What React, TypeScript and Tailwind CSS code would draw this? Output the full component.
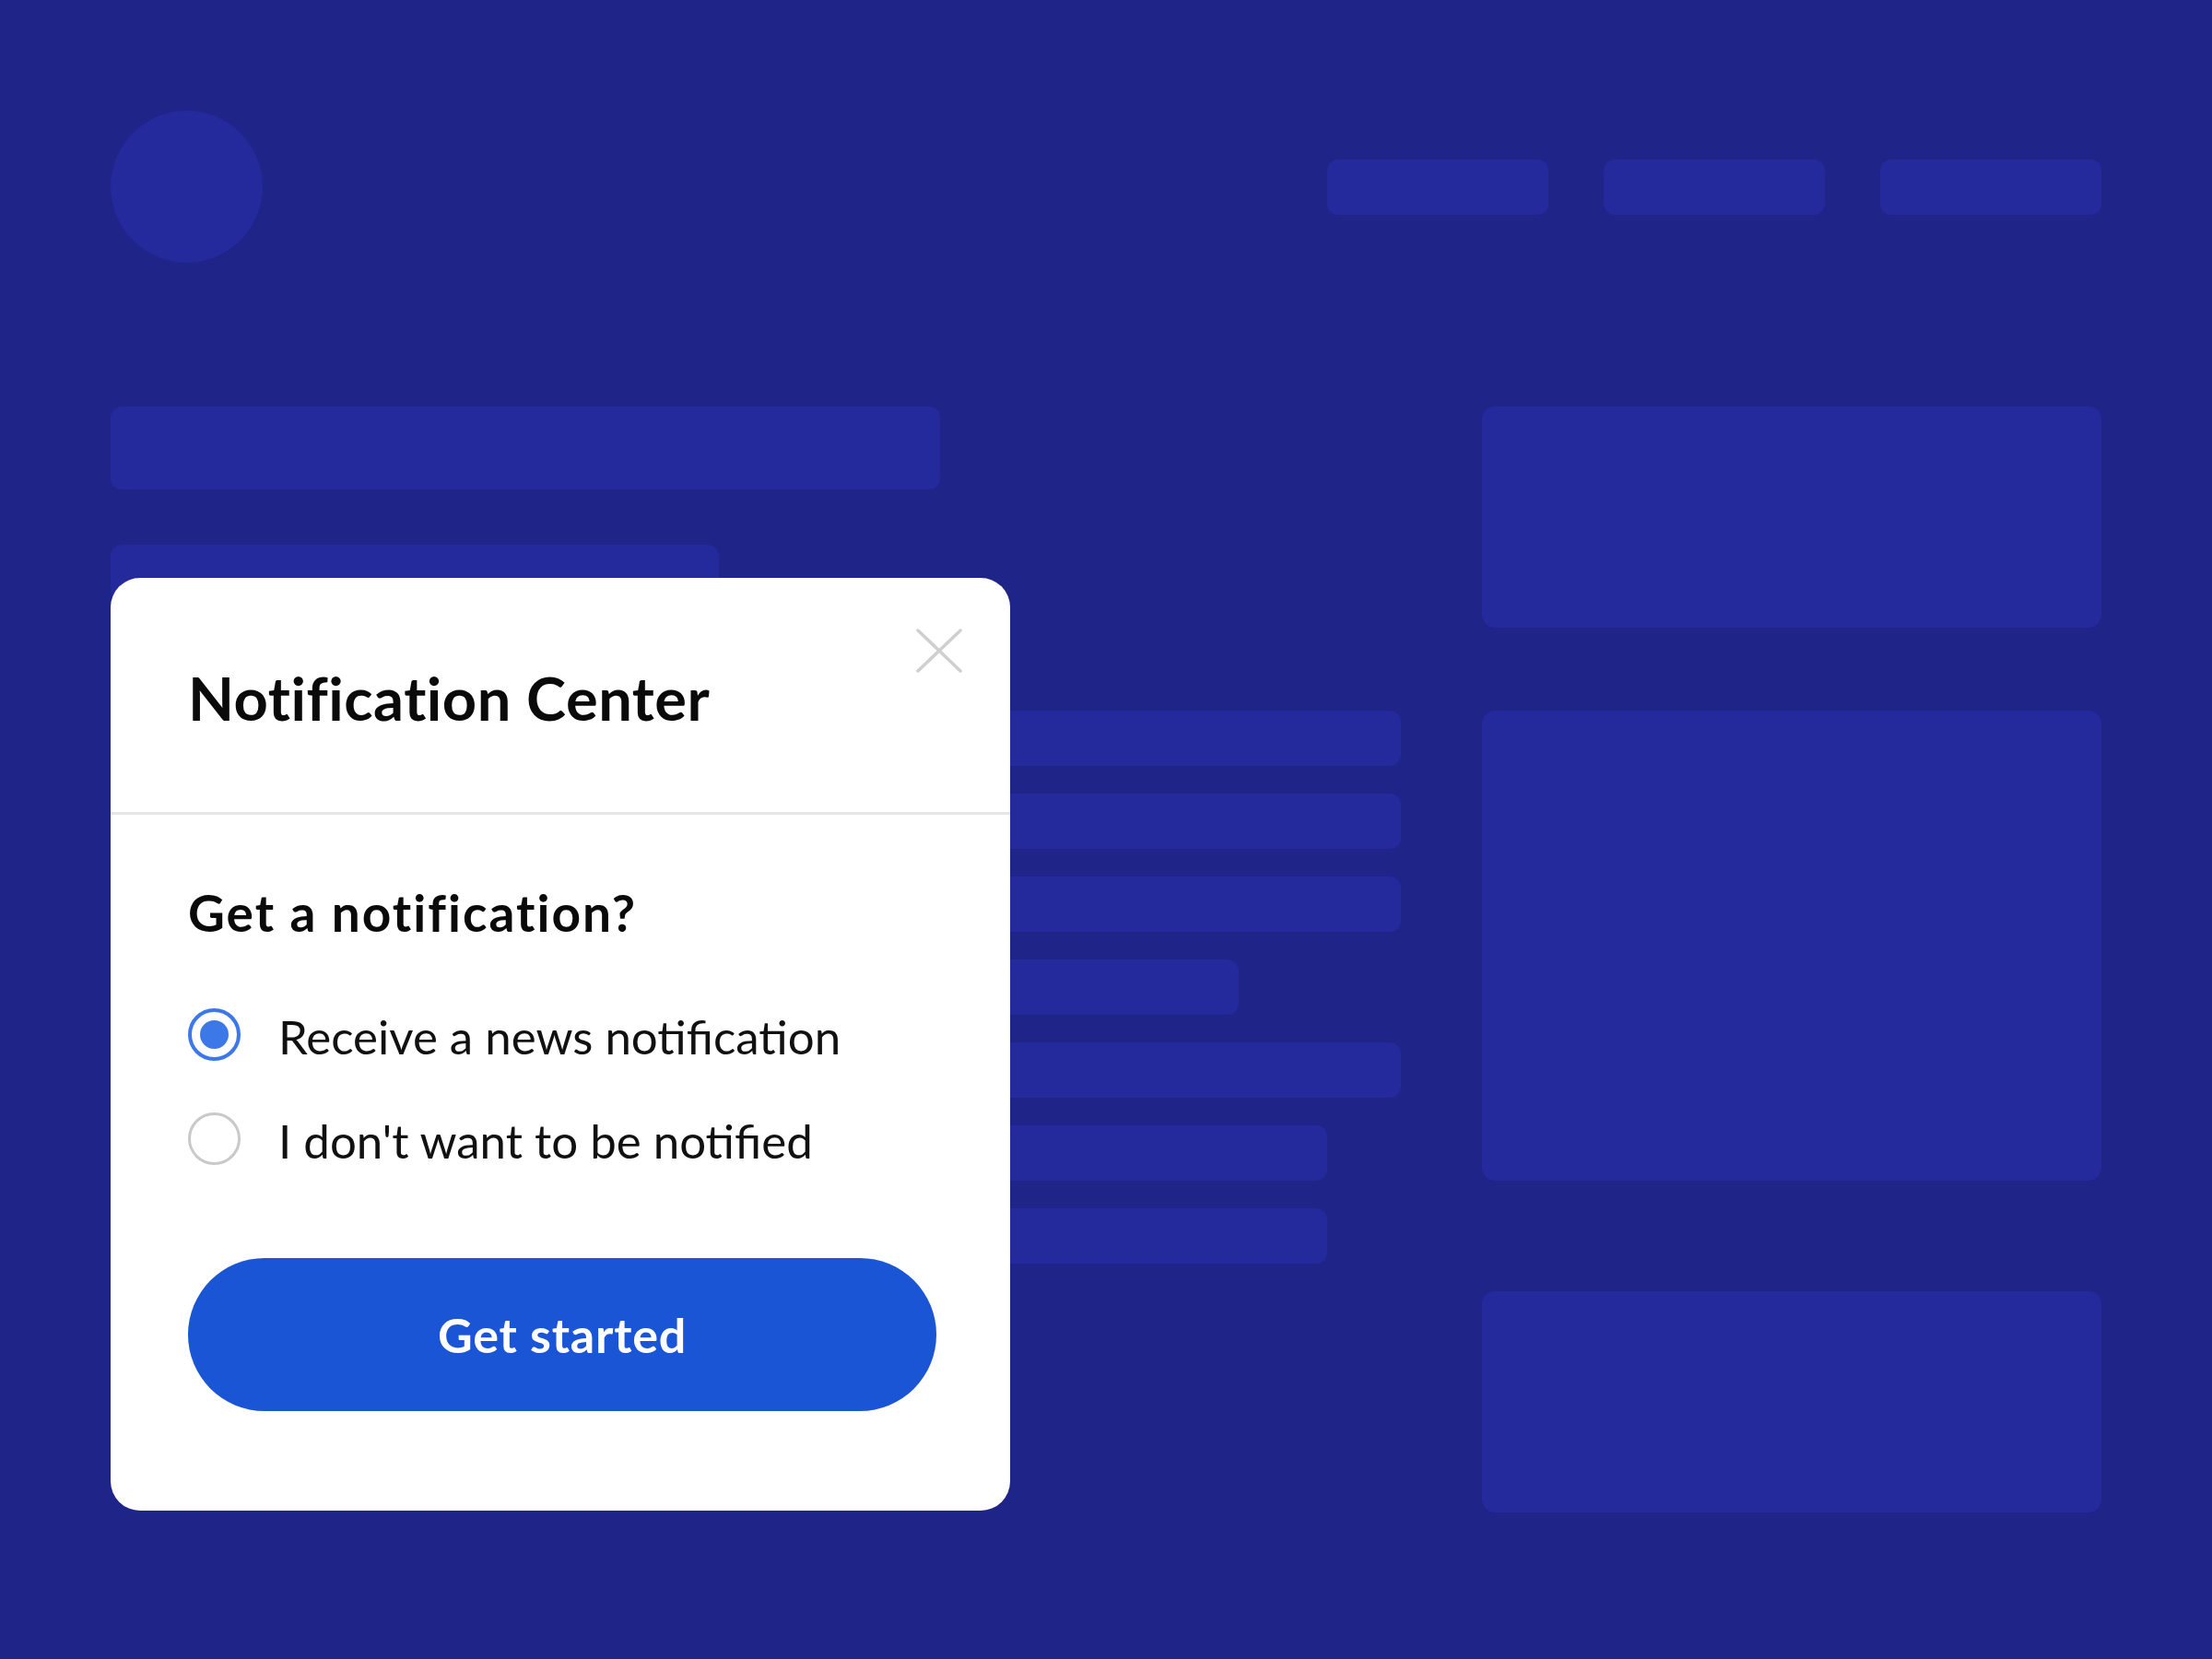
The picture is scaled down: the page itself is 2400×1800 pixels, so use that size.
import React from "react";

const bar = "rounded-[12px] bg-[#24299c]";

export default function App() {
  return (
    <div className="relative w-[2400px] h-[1800px] bg-[#1f2488] overflow-hidden" style={{ fontFamily: "Lato, 'Open Sans', sans-serif" }}>
      <div className="px-[120px] pt-[120px]">
        {/* header */}
        <div className="flex items-center justify-between">
          <div className="w-[165px] h-[165px] rounded-full bg-[#24299c]" />
          <div className="flex gap-[60px]">
            <div className={`w-[240px] h-[60px] ${bar}`} />
            <div className={`w-[240px] h-[60px] ${bar}`} />
            <div className={`w-[240px] h-[60px] ${bar}`} />
          </div>
        </div>
        {/* main */}
        <div className="mt-[156px] flex gap-[88px]">
          <div className="w-[1400px] flex flex-col">
            <div className={`w-[900px] h-[90px] ${bar}`} />
            <div className={`mt-[60px] w-[660px] h-[60px] ${bar}`} />
            <div className="mt-[120px] flex flex-col gap-[30px]">
              <div className={`w-[1400px] h-[60px] ${bar}`} />
              <div className={`w-[1400px] h-[60px] ${bar}`} />
              <div className={`w-[1400px] h-[60px] ${bar}`} />
              <div className={`w-[1224px] h-[60px] ${bar}`} />
              <div className={`w-[1400px] h-[60px] ${bar}`} />
              <div className={`w-[1320px] h-[60px] ${bar}`} />
              <div className={`w-[1320px] h-[60px] ${bar}`} />
            </div>
          </div>
          <div className="w-[672px] flex flex-col">
            <div className="h-[240px] rounded-[14px] bg-[#24299c]" />
            <div className="mt-[90px] h-[510px] rounded-[14px] bg-[#24299c]" />
            <div className="mt-[120px] h-[240px] rounded-[14px] bg-[#24299c]" />
          </div>
        </div>
      </div>

      {/* modal */}
      <div className="absolute left-[120px] top-[627px] w-[976px] h-[1012px] bg-white rounded-[32px]">
        <button className="absolute right-[52px] top-[54px] w-[50px] h-[50px] flex items-center justify-center">
          <svg width="50" height="50" viewBox="0 0 50 50" fill="none">
            <path d="M2 3 L48 47 M48 3 L2 47" stroke="#cfcfcf" strokeWidth="3.5" strokeLinecap="round" />
          </svg>
        </button>
        <div className="pl-[84px] pr-[80px] pt-[98px] pb-[91px] border-b-[3px] border-[#e6e6e6]">
          <h1 className="text-[65px] leading-[65px] tracking-[0.5px] font-bold text-[#0a0a0a]">Notification Center</h1>
        </div>
        <div className="pl-[84px] pr-[80px] pt-[79px]">
          <h2 className="text-[55px] leading-[55px] tracking-[2px] font-bold text-[#0a0a0a]">Get a notification?</h2>
          <div className="mt-[75px] flex flex-col gap-[55px]">
            <label className="flex items-center gap-[41px] h-[58px]">
              <span className="w-[57px] h-[57px] rounded-full border-[4px] border-[#3c78e8] flex items-center justify-center shrink-0">
                <span className="w-[31px] h-[31px] rounded-full bg-[#3c78e8]" />
              </span>
              <span className="text-[51px] leading-[58px] pt-[6px] text-[#111111]">Receive a news notification</span>
            </label>
            <label className="flex items-center gap-[41px] h-[58px]">
              <span className="w-[57px] h-[57px] rounded-full border-[3px] border-[#c9c9c9] shrink-0" />
              <span className="text-[51px] leading-[58px] pt-[6px] text-[#111111]">I don't want to be notified</span>
            </label>
          </div>
          <button className="mt-[101px] w-full h-[166px] rounded-full bg-[#1a55d6] text-white text-[52px] tracking-[0.8px] font-bold">
            Get started
          </button>
        </div>
      </div>
    </div>
  );
}
